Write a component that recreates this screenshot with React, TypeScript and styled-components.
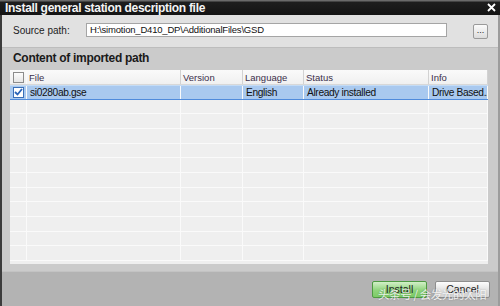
import React from "react";
import styled, { createGlobalStyle } from "styled-components";

const GlobalStyle = createGlobalStyle`
  html, body {
    margin: 0;
    padding: 0;
    background: #b3b3b3;
  }
  body {
    font-family: "Liberation Sans", Arial, sans-serif;
  }
`;

const Window = styled.div`
  position: relative;
  width: 500px;
  height: 306px;
  display: flex;
  flex-direction: column;
  overflow: hidden;
  background: #b3b3b3;
`;

const TitleBar = styled.div`
  height: 15px;
  display: flex;
  align-items: center;
  justify-content: space-between;
  padding: 0 4px 0 5px;
  background: linear-gradient(#6a6a6a 0, #6a6a6a 1px, #1e1e1e 2px, #141414 100%);
  color: #f4f4f4;
  box-sizing: border-box;
`;

const Title = styled.div`
  font-size: 12px;
  font-weight: bold;
  letter-spacing: -0.3px;
  line-height: 15px;
  padding-top: 1px;
`;

const CloseButton = styled.div`
  width: 10px;
  height: 11px;
  display: flex;
  align-items: center;
  justify-content: center;
`;

const Body = styled.div`
  flex: 1;
  display: flex;
  flex-direction: column;
  border-left: 2px solid #3c3c3c;
  border-right: 2px solid #9c9c9c;
`;

const SourceSection = styled.div`
  height: 33px;
  display: flex;
  align-items: center;
  padding: 0 0 2px 11px;
  background: #e1e1e1;
  border-bottom: 1px solid #bdbdbd;
  box-sizing: border-box;
`;

const Label = styled.div`
  width: 73px;
  font-size: 10px;
  color: #222;
`;

const PathInput = styled.div`
  width: 361px;
  height: 14px;
  background: #ffffff;
  border: 1px solid #a5a5a5;
  box-sizing: border-box;
  font-size: 9.5px;
  letter-spacing: -0.2px;
  line-height: 12px;
  padding-left: 3px;
  color: #111;
  white-space: nowrap;
  overflow: hidden;
`;

const BrowseButton = styled.div`
  width: 15px;
  height: 15px;
  margin: 2px 0 0 26px;
  box-sizing: border-box;
  border: 1px solid #9a9a9a;
  border-radius: 2px;
  background: linear-gradient(#fbfbfb, #dcdcdc);
  font-size: 9px;
  line-height: 11px;
  text-align: center;
  color: #222;
`;

const ContentSection = styled.div`
  height: 224px;
  background: #cbcbcb;
  padding: 3px 8px 0 8px;
  box-sizing: border-box;
  border-bottom: 1px solid #c3c3c3;
`;

const Heading = styled.div`
  height: 19px;
  font-size: 12px;
  font-weight: bold;
  letter-spacing: -0.3px;
  color: #1a1a1a;
  line-height: 15px;
  padding-left: 3px;
`;

const Table = styled.div`
  width: 478px;
  height: 194px;
  background: #efefef;
  overflow: hidden;
`;

const columns = "17px 154px 62px 61px 125px 59px";

const HeaderRow = styled.div`
  display: grid;
  grid-template-columns: ${columns};
  height: 15px;
  background: linear-gradient(#fafafa, #f0f0f0);
  border-bottom: 1px solid #d8d8d8;
  box-sizing: border-box;
`;

const HeaderCell = styled.div`
  display: flex;
  align-items: center;
  padding-left: 2px;
  border-right: 1px solid #d2d2d2;
  font-size: 9.5px;
  color: #3b2f4a;
  white-space: nowrap;
  overflow: hidden;
`;

const Row = styled.div<{ $selected?: boolean }>`
  display: grid;
  grid-template-columns: ${columns};
  height: 14.67px;
  box-sizing: border-box;
  background: ${(p) => (p.$selected ? "#a9c9ef" : "#efefef")};
  border-bottom: 1px solid ${(p) => (p.$selected ? "#4f8bdc" : "#fafafa")};
  border-top: ${(p) => (p.$selected ? "1px solid #c4dcf6" : "none")};
`;

const Cell = styled.div`
  display: flex;
  align-items: center;
  padding-left: 3px;
  border-right: 1px solid #fafafa;
  font-size: 10.2px;
  letter-spacing: -0.35px;
  color: #111;
  white-space: nowrap;
  overflow: hidden;
`;

const CheckCell = styled.div`
  display: flex;
  align-items: center;
  justify-content: center;
  border-right: 1px solid #fafafa;
`;

const CheckBox = styled.div<{ $checked?: boolean }>`
  width: 11px;
  height: 11px;
  box-sizing: border-box;
  border: 1px solid ${(p) => (p.$checked ? "#3a6fb8" : "#8c8c8c")};
  background: ${(p) => (p.$checked ? "#ffffff" : "linear-gradient(#fdfdfd, #e6e6e6)")};
  display: flex;
  align-items: center;
  justify-content: center;
`;

const Footer = styled.div`
  flex: 1;
  display: flex;
  justify-content: flex-end;
  align-items: flex-start;
  gap: 8px;
  padding: 9px 8px 0 0;
  background: #b3b3b3;
`;

const Button = styled.div<{ $primary?: boolean }>`
  width: 55px;
  height: 17px;
  box-sizing: border-box;
  border: 1px solid ${(p) => (p.$primary ? "#4e9a43" : "#8e8e8e")};
  border-radius: 2px;
  background: ${(p) =>
    p.$primary
      ? "linear-gradient(#d3efc9, #8fd47c 55%, #7ccb66)"
      : "linear-gradient(#fdfdfd, #e1e1e1 55%, #d6d6d6)"};
  font-size: 10.5px;
  line-height: 14px;
  text-align: center;
  color: #222;
`;

const Watermark = styled.div`
  position: absolute;
  left: 378px;
  top: 287px;
  font-family: "Noto Sans CJK SC", sans-serif;
  font-size: 11.5px;
  letter-spacing: -0.4px;
  line-height: 15px;
  color: rgba(255, 255, 255, 0.85);
  text-shadow: 0 0 2px rgba(0, 0, 0, 0.25);
  white-space: nowrap;
`;

const rows = [
  { checked: true, file: "si0280ab.gse", version: "", language: "English", status: "Already installed", info: "Drive Based.." },
];

const EMPTY_ROWS = 11;

const App: React.FC = () => {
  return (
    <>
      <GlobalStyle />
      <Window>
        <TitleBar>
          <Title>Install general station description file</Title>
          <CloseButton>
            <svg width="9" height="9" viewBox="0 0 9 9">
              <path d="M1 1 L8 8 M8 1 L1 8" stroke="#ffffff" strokeWidth="1.8" />
            </svg>
          </CloseButton>
        </TitleBar>
        <Body>
          <SourceSection>
            <Label>Source path:</Label>
            <PathInput>H:\simotion_D410_DP\AdditionalFiles\GSD</PathInput>
            <BrowseButton>...</BrowseButton>
          </SourceSection>
          <ContentSection>
            <Heading>Content of imported path</Heading>
            <Table>
              <HeaderRow>
                <CheckCell>
                  <CheckBox />
                </CheckCell>
                <HeaderCell>File</HeaderCell>
                <HeaderCell>Version</HeaderCell>
                <HeaderCell>Language</HeaderCell>
                <HeaderCell>Status</HeaderCell>
                <HeaderCell>Info</HeaderCell>
              </HeaderRow>
              {rows.map((r) => (
                <Row $selected key={r.file}>
                  <CheckCell>
                    <CheckBox $checked={r.checked}>
                      <svg width="9" height="8" viewBox="0 0 9 8">
                        <path d="M1 4 L3.5 6.5 L8 1" stroke="#2a64b8" strokeWidth="1.8" fill="none" />
                      </svg>
                    </CheckBox>
                  </CheckCell>
                  <Cell>{r.file}</Cell>
                  <Cell>{r.version}</Cell>
                  <Cell>{r.language}</Cell>
                  <Cell>{r.status}</Cell>
                  <Cell>{r.info}</Cell>
                </Row>
              ))}
              {Array.from({ length: EMPTY_ROWS }).map((_, i) => (
                <Row key={i}>
                  <CheckCell />
                  <Cell />
                  <Cell />
                  <Cell />
                  <Cell />
                  <Cell />
                </Row>
              ))}
            </Table>
          </ContentSection>
          <Footer>
            <Button $primary>Install</Button>
            <Button>Cancel</Button>
          </Footer>
        </Body>
        <Watermark>头条号 / 会发光的太阳</Watermark>
      </Window>
    </>
  );
};

export default App;
